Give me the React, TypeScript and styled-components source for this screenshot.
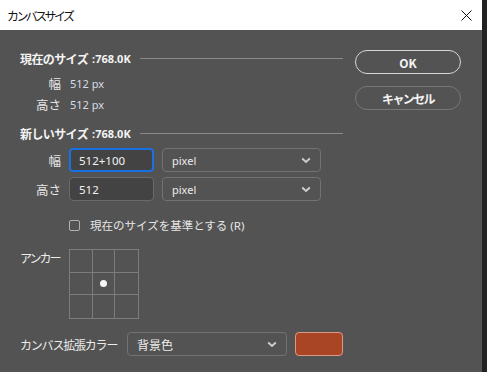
import styled, { createGlobalStyle } from "styled-components";

const GlobalStyle = createGlobalStyle`
  html, body {
    margin: 0;
    padding: 0;
    background: #535353;
  }
  body {
    font-family: "Noto Sans", "Noto Sans CJK JP", sans-serif;
  }
`;

const Screen = styled.div`
  display: flex;
  width: 487px;
  height: 372px;
  overflow: hidden;
`;

const Window = styled.div`
  flex: 1;
  display: flex;
  flex-direction: column;
`;

const Edge = styled.div`
  width: 5px;
  background: #222222;
`;

const TitleBar = styled.div`
  height: 30px;
  background: #ffffff;
  display: flex;
  align-items: center;
  justify-content: space-between;
  padding: 0 10px 0 7px;

  .title {
    font-family: "Noto Sans CJK JP", sans-serif;
    font-size: 12px;
    letter-spacing: -2.6px;
    color: #111;
  }
`;

const Body = styled.div`
  flex: 1;
  background: #535353;
  display: flex;
  gap: 12px;
  padding: 20px 0 0 20px;
  color: #e6e6e6;
  font-family: "Noto Sans CJK JP", sans-serif;
`;

const Main = styled.div`
  width: 323px;
  display: flex;
  flex-direction: column;
`;

const SectionHeader = styled.div<{ $top?: number }>`
  height: 16px;
  margin-top: ${(p) => p.$top ?? 0}px;
  display: flex;
  align-items: center;
  color: #f4f4f4;

  .name {
    font-size: 12px;
    font-weight: 700;
    letter-spacing: -0.6px;
  }
  .size {
    font-family: "Noto Sans", sans-serif;
    font-size: 11px;
    font-weight: 700;
    margin-left: 4px;
  }
  .line {
    flex: 1;
    height: 1px;
    background: #8a8a8a;
    margin-left: 9px;
  }
`;

const InfoRow = styled.div<{ $top: number }>`
  height: 21px;
  margin-top: ${(p) => p.$top}px;
  display: flex;
  align-items: center;
  gap: 9px;

  .value {
    font-family: "Noto Sans", sans-serif;
    font-size: 11px;
    color: #d7dce4;
  }
`;

const Label = styled.div`
  width: 41px;
  text-align: right;
  font-size: 12.5px;
  color: #e8e8e8;
`;

const FieldRow = styled.div<{ $top: number }>`
  height: 24px;
  margin-top: ${(p) => p.$top}px;
  display: flex;
  align-items: center;
  gap: 8px;
`;

const Input = styled.div<{ $focused?: boolean }>`
  width: 85px;
  height: 24px;
  box-sizing: border-box;
  background: #434343;
  border: ${(p) => (p.$focused ? "2px solid #1b6fe0" : "1px solid #6a6a6a")};
  border-radius: 4px;
  display: flex;
  align-items: center;
  padding-left: ${(p) => (p.$focused ? 8 : 9)}px;
  font-family: "Noto Sans", sans-serif;
  font-size: 11.5px;
  color: #f2f2f2;
`;

const Select = styled.div<{ $width: number }>`
  width: ${(p) => p.$width}px;
  height: 24px;
  box-sizing: border-box;
  border: 1px solid #727272;
  border-radius: 4px;
  display: flex;
  align-items: center;
  justify-content: space-between;
  padding: 0 9px 0 9px;
  font-size: 12px;
  color: #ececec;

  .latin {
    font-family: "Noto Sans", sans-serif;
    font-size: 11px;
  }
`;

const CheckRow = styled.div`
  height: 16px;
  margin-top: 16px;
  padding-left: 49px;
  display: flex;
  align-items: center;
  gap: 10px;
  font-size: 11.5px;
  color: #e6e6e6;

  .key {
    font-family: "Noto Sans", sans-serif;
    margin-left: 3px;
  }
`;

const CheckBox = styled.div`
  width: 11px;
  height: 11px;
  box-sizing: border-box;
  border: 1px solid #b0b0b0;
  border-radius: 2px;
`;

const AnchorRow = styled.div`
  margin-top: 16px;
  display: flex;

  .label {
    width: 49px;
    height: 18px;
    line-height: 18px;
    font-size: 12px;
    letter-spacing: -2px;
    color: #ececec;
  }
`;

const AnchorGrid = styled.div`
  width: 70px;
  height: 70px;
  box-sizing: border-box;
  border: 1px solid #7c7c7c;
  display: grid;
  grid-template-columns: repeat(3, 1fr);
  grid-template-rows: repeat(3, 1fr);
`;

const AnchorCell = styled.div<{ $col: number; $row: number }>`
  border-right: ${(p) => (p.$col < 2 ? "1px solid #7c7c7c" : "none")};
  border-bottom: ${(p) => (p.$row < 2 ? "1px solid #7c7c7c" : "none")};
  display: flex;
  align-items: center;
  justify-content: center;
`;

const Dot = styled.div`
  width: 7px;
  height: 7px;
  border-radius: 50%;
  background: #f6f6f6;
`;

const ColorRow = styled.div`
  margin-top: 13px;
  display: flex;
  align-items: center;
  height: 24px;

  .label {
    width: 107px;
    font-size: 12px;
    letter-spacing: -1.2px;
    color: #ececec;
  }
`;

const Swatch = styled.div`
  width: 48px;
  height: 24px;
  box-sizing: border-box;
  margin-left: 8px;
  background: #a94424;
  border: 1px solid #d99a86;
  border-radius: 4px;
`;

const Buttons = styled.div`
  width: 106px;
  display: flex;
  flex-direction: column;
  gap: 12px;
`;

const Button = styled.div<{ $primary?: boolean }>`
  height: 24px;
  box-sizing: border-box;
  border-radius: 12px;
  border: ${(p) => (p.$primary ? "1.5px solid #d6d6d6" : "1px solid #777777")};
  display: flex;
  align-items: center;
  justify-content: center;
  font-size: 12px;
  font-weight: 700;
  color: #f4f4f4;
  letter-spacing: ${(p) => (p.$primary ? "0" : "-1.6px")};
`;

const Chevron = () => (
  <svg width="10" height="7" viewBox="0 0 10 7">
    <path d="M1.2 1.5 L5 5 L8.8 1.5" fill="none" stroke="#d0d0d0" strokeWidth="1.8" />
  </svg>
);

const CloseIcon = () => (
  <svg width="11" height="11" viewBox="0 0 11 11">
    <path d="M0.5 0.5 L10.5 10.5 M10.5 0.5 L0.5 10.5" stroke="#111" strokeWidth="1" />
  </svg>
);

const App = () => {
  return (
    <Screen>
      <GlobalStyle />
      <Window>
        <TitleBar>
          <span className="title">カンバスサイズ</span>
          <CloseIcon />
        </TitleBar>
        <Body>
          <Main>
            <SectionHeader>
              <span className="name">現在のサイズ</span>
              <span className="size">:768.0K</span>
              <span className="line" />
            </SectionHeader>
            <InfoRow $top={7}>
              <Label>幅</Label>
              <span className="value">512 px</span>
            </InfoRow>
            <InfoRow $top={0}>
              <Label>高さ</Label>
              <span className="value">512 px</span>
            </InfoRow>

            <SectionHeader $top={10}>
              <span className="name">新しいサイズ</span>
              <span className="size">:768.0K</span>
              <span className="line" />
            </SectionHeader>
            <FieldRow $top={7}>
              <Label>幅</Label>
              <Input $focused>512+100</Input>
              <Select $width={159}>
                <span className="latin">pixel</span>
                <Chevron />
              </Select>
            </FieldRow>
            <FieldRow $top={5}>
              <Label>高さ</Label>
              <Input>512</Input>
              <Select $width={159}>
                <span className="latin">pixel</span>
                <Chevron />
              </Select>
            </FieldRow>

            <CheckRow>
              <CheckBox />
              <span>
                現在のサイズを基準とする<span className="key">(R)</span>
              </span>
            </CheckRow>

            <AnchorRow>
              <span className="label">アンカー</span>
              <AnchorGrid>
                {Array.from({ length: 9 }).map((_, i) => (
                  <AnchorCell key={i} $col={i % 3} $row={Math.floor(i / 3)}>
                    {i === 4 && <Dot />}
                  </AnchorCell>
                ))}
              </AnchorGrid>
            </AnchorRow>

            <ColorRow>
              <span className="label">カンバス拡張カラー</span>
              <Select $width={160}>
                <span>背景色</span>
                <Chevron />
              </Select>
              <Swatch />
            </ColorRow>
          </Main>
          <Buttons>
            <Button $primary>OK</Button>
            <Button>キャンセル</Button>
          </Buttons>
        </Body>
      </Window>
      <Edge />
    </Screen>
  );
};

export default App;
